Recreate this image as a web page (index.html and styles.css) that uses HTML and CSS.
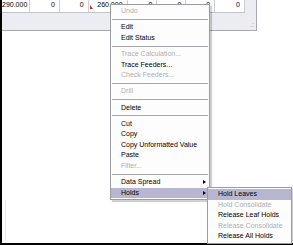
FILE: index.html
```html
<!DOCTYPE html>
<html>
<head>
<meta charset="utf-8">
<link rel="stylesheet" href="styles.css">
</head>
<body>
<div class="screen">
  <div class="panel">
    <div class="row">
      <div class="cell w27">290.000</div>
      <div class="cell w29">0</div>
      <div class="cell w28">0</div>
      <div class="cell w38 marked">260.000</div>
      <div class="cell w29">0</div>
      <div class="cell w28">0</div>
      <div class="cell w28">0</div>
      <div class="cell w29">0</div>
    </div>
    <div class="vstrip"></div>
    <div class="hband"></div>
    <div class="corner"><span class="grip">.:</span></div>
  </div>
  <div class="sideline"></div>

  <div class="menu main">
    <div class="item off">Undo</div>
    <div class="sep"></div>
    <div class="item">Edit</div>
    <div class="item">Edit Status</div>
    <div class="sep"></div>
    <div class="item off">Trace Calculation...</div>
    <div class="item">Trace Feeders...</div>
    <div class="item off">Check Feeders...</div>
    <div class="sep"></div>
    <div class="item off">Drill</div>
    <div class="sep"></div>
    <div class="item">Delete</div>
    <div class="sep"></div>
    <div class="item">Cut</div>
    <div class="item">Copy</div>
    <div class="item">Copy Unformatted Value</div>
    <div class="item">Paste</div>
    <div class="item off">Filter...</div>
    <div class="sep"></div>
    <div class="item">Data Spread<span class="arrow"></span></div>
    <div class="item hot">Holds<span class="arrow"></span></div>
  </div>

  <div class="menu sub">
    <div class="item hot">Hold Leaves</div>
    <div class="item off">Hold Consolidate</div>
    <div class="item">Release Leaf Holds</div>
    <div class="item off">Release Consolidate</div>
    <div class="item">Release All Holds</div>
  </div>
</div>
</body>
</html>
```

FILE: styles.css
```css
html, body {
  margin: 0;
  padding: 0;
  background: #fff;
}
body {
  width: 293px;
  height: 245px;
  overflow: hidden;
  font-family: "Liberation Sans", Arial, sans-serif;
  font-size: 7px;
  color: #000;
}
.screen {
  position: relative;
  width: 291px;
  height: 243px;
  border-left: 2px solid #000;
  border-bottom: 2px solid #000;
}
.panel {
  display: grid;
  grid-template-columns: 243px 11px;
  grid-template-rows: 13px 17px;
  width: 254px;
  background: #ececf3;
  border-right: 1px solid #a9a9ad;
  border-bottom: 1px solid #a9a9ad;
}
.row {
  display: flex;
  background: #fff;
  border-bottom: 1px solid #c4c4c8;
}
.cell {
  position: relative;
  height: 12px;
  line-height: 10px;
  text-align: right;
  padding-right: 4px;
  box-sizing: border-box;
  border-right: 1px solid #cfcfd3;
}
.w27 { width: 28px; }
.w28 { width: 29px; }
.w29 { width: 30px; }
.w38 { width: 39px; }
.marked::before {
  content: "";
  position: absolute;
  left: 1px;
  top: 5px;
  border-left: 3px solid #c0282a;
  border-top: 4px solid transparent;
}
.vstrip {
  background: #ececf3;
}
.hband {
  background: #ececf3;
}
.corner {
  display: flex;
  align-items: flex-end;
  justify-content: flex-end;
}
.grip {
  font-size: 7px;
  line-height: 7px;
  color: #9a9aa6;
  padding: 0 2px 2px 0;
  letter-spacing: 0;
}
.sideline {
  position: absolute;
  left: 3px;
  top: 200px;
  width: 1px;
  height: 40px;
  background: #ececee;
}
.menu {
  position: absolute;
  background: #fdfdfd;
  border: 1px solid #9c9ca0;
  box-sizing: border-box;
  padding: 1px 0;
  box-shadow: 2px 2px 1px rgba(0, 0, 0, 0.18);
}
.main {
  left: 108px;
  top: 4px;
  width: 100px;
}
.sub {
  left: 205px;
  top: 187px;
  width: 85px;
}
.item {
  display: flex;
  align-items: center;
  height: 10.5px;
  line-height: 10.5px;
  padding-left: 10px;
  padding-right: 3px;
  white-space: nowrap;
}
.item.off {
  color: #aeaeb2;
}
.item.hot {
  background: #b8b7d2;
}
.sep {
  height: 5.75px;
  display: flex;
  align-items: center;
  padding: 0 1px;
}
.sep::before {
  content: "";
  flex: 1;
  height: 1px;
  background: #a6a6aa;
}
.arrow {
  margin-left: auto;
  width: 0;
  height: 0;
  border-left: 3px solid #000;
  border-top: 2.5px solid transparent;
  border-bottom: 2.5px solid transparent;
}
```
